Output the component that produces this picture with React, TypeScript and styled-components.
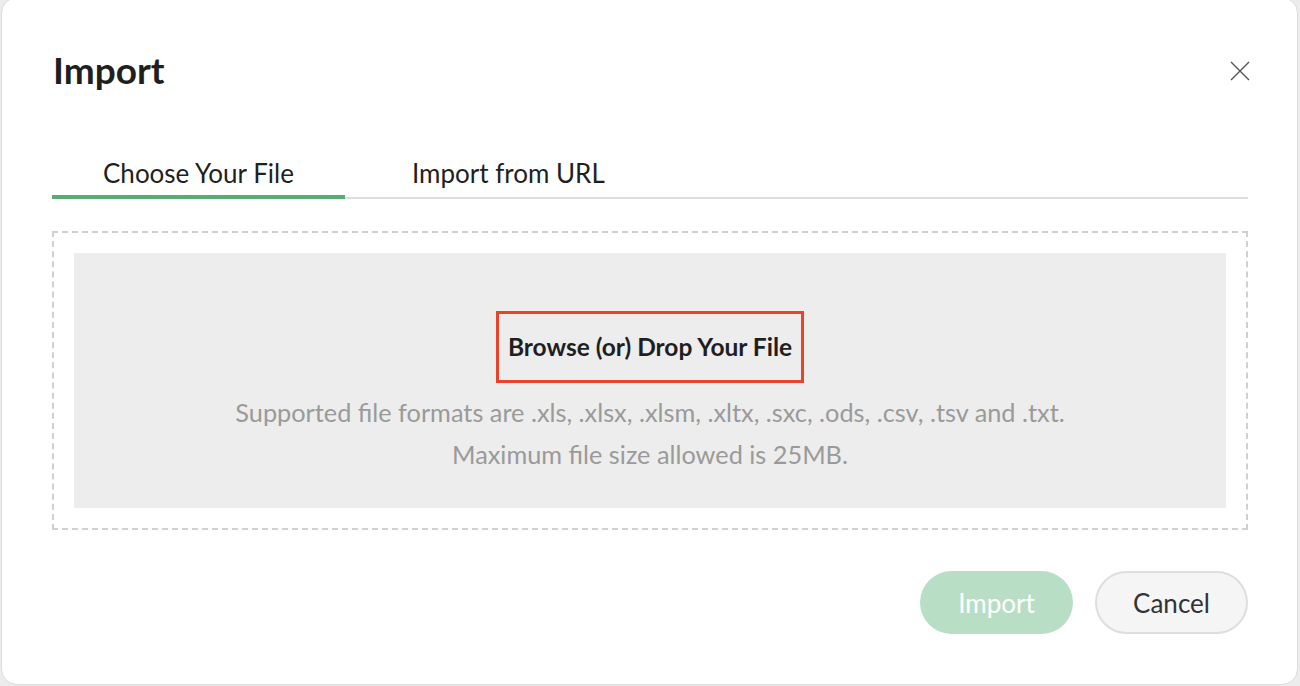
import styled, { createGlobalStyle } from "styled-components";

const GlobalStyle = createGlobalStyle`
  html, body {
    margin: 0;
    padding: 0;
    background: #ececec;
    font-family: Lato, "Open Sans", sans-serif;
  }
`;

const tabs = [
  { label: "Choose Your File", active: true },
  { label: "Import from URL", active: false },
];

export default function App() {
  return (
    <>
      <GlobalStyle />
      <Dialog>
        <DialogHeader>
          <Title>Import</Title>
          <CloseButton aria-label="Close">
            <svg width="20" height="20" viewBox="0 0 20 20">
              <path d="M1 1L19 19M19 1L1 19" stroke="#555" strokeWidth="1.4" />
            </svg>
          </CloseButton>
        </DialogHeader>
        <TabBar>
          {tabs.map((tab) => (
            <Tab key={tab.label} $active={tab.active}>
              {tab.label}
            </Tab>
          ))}
        </TabBar>
        <DropZone>
          <DropArea>
            <BrowseBox>Browse (or) Drop Your File</BrowseBox>
            <HintText>
              Supported file formats are .xls, .xlsx, .xlsm, .xltx, .sxc, .ods, .csv, .tsv and .txt.
            </HintText>
            <HintText>Maximum file size allowed is 25MB.</HintText>
          </DropArea>
        </DropZone>
        <Footer>
          <PrimaryButton disabled>Import</PrimaryButton>
          <SecondaryButton>Cancel</SecondaryButton>
        </Footer>
      </Dialog>
    </>
  );
}

const Dialog = styled.div`
  box-sizing: border-box;
  width: 1297px;
  height: 688px;
  margin: -3px 0 0 1px;
  background: #fff;
  border: 1px solid #dcdcdc;
  border-radius: 16px;
  padding: 3px 49px 0 50px;
  display: flex;
  flex-direction: column;
`;

const DialogHeader = styled.header`
  display: flex;
  justify-content: space-between;
  align-items: center;
  height: 140px;
`;

const Title = styled.h1`
  margin: -3px 0 0 1px;
  font-size: 37px;
  font-weight: 700;
  color: #1f1f1f;
`;

const CloseButton = styled.button`
  border: none;
  background: none;
  padding: 0;
  margin: -1px -2px 0 0;
  display: flex;
  cursor: pointer;
`;

const TabBar = styled.nav`
  display: flex;
  gap: 16px;
  margin-top: 16px;
  border-bottom: 2px solid #dedede;
`;

const Tab = styled.div<{ $active: boolean }>`
  padding: 0 51px 6px;
  font-size: 26px;
  color: #1f1f1f;
  margin-bottom: -2px;
  border-bottom: 4px solid ${(p) => (p.$active ? "#55ad74" : "transparent")};
`;

const DropZone = styled.div`
  margin-top: 32px;
  border: 2px dashed #d0d0d0;
  padding: 20px;
`;

const DropArea = styled.div`
  box-sizing: border-box;
  height: 255px;
  padding-top: 58px;
  background: #ededed;
  display: flex;
  flex-direction: column;
  align-items: center;
`;

const BrowseBox = styled.div`
  border: 3px solid #e8432b;
  padding: 18px 9px 19px;
  font-size: 24.5px;
  font-weight: 700;
  color: #1f1f1f;
  margin-bottom: 8px;
`;

const HintText = styled.p`
  margin: 0;
  font-size: 25.3px;
  line-height: 42px;
  color: #9a9a9a;
`;

const Footer = styled.footer`
  display: flex;
  justify-content: flex-end;
  gap: 22px;
  margin-top: 41px;
`;

const PillButton = styled.button`
  box-sizing: border-box;
  width: 153px;
  height: 63px;
  border-radius: 32px;
  font-family: Lato, "Open Sans", sans-serif;
  font-size: 26px;
`;

const PrimaryButton = styled(PillButton)`
  background: #b8dfc6;
  border: none;
  color: #fff;
`;

const SecondaryButton = styled(PillButton)`
  background: #f5f5f5;
  border: 2px solid #dedede;
  color: #333;
`;
